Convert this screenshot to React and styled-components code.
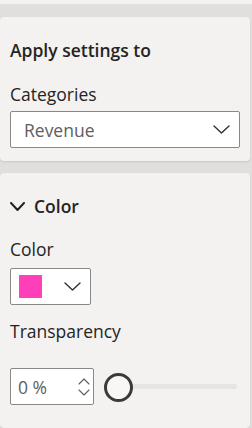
import React from 'react';
import styled, { createGlobalStyle } from 'styled-components';

const GlobalStyle = createGlobalStyle`
  html, body {
    margin: 0;
    padding: 0;
    background: #e1dfdd;
  }
  body {
    font-family: "Open Sans", "Noto Sans", Arial, sans-serif;
    color: #252423;
  }
`;

const Pane = styled.div`
  width: 252px;
  height: 428px;
  overflow: hidden;
  background: #e1dfdd;
  display: flex;
  flex-direction: column;
`;

const TopStrip = styled.div`
  height: 4px;
  background: #f3f2f1;
  flex-shrink: 0;
`;

const Card = styled.section`
  margin: ${p => p.$top}px 2px 0 0;
  background: #f3f2f1;
  border-radius: 4px;
  box-shadow: 0 1px 2px rgba(0, 0, 0, 0.1);
  padding: 21px 10px ${p => p.$bottom}px 10px;
  display: flex;
  flex-direction: column;
  flex: ${p => (p.$grow ? 1 : 'none')};
`;

const Title = styled.div`
  height: 24px;
  line-height: 24px;
  font-size: 17.5px;
  font-weight: 600;
  display: flex;
  align-items: center;
  gap: 9px;
`;

const Label = styled.div`
  height: 24px;
  line-height: 24px;
  font-size: 17.5px;
  margin-top: ${p => p.$gap}px;
  margin-bottom: ${p => p.$after}px;
`;

const Select = styled.div`
  box-sizing: border-box;
  height: 37px;
  width: ${p => p.$width}px;
  background: #fff;
  border: 1px solid #8a8886;
  border-radius: 2px;
  display: flex;
  align-items: center;
  justify-content: space-between;
  padding: 0 9px 0 ${p => p.$padLeft}px;
  font-size: 17.5px;
  color: #605e5c;
`;

const Swatch = styled.div`
  width: 23px;
  height: 23px;
  box-sizing: border-box;
  background: #ff3fb7;
  border: 1px solid #8a8886;
`;

const SliderRow = styled.div`
  display: flex;
  align-items: center;
`;

const NumberBox = styled.div`
  box-sizing: border-box;
  width: 84px;
  height: 37px;
  background: #fff;
  border: 1px solid #8a8886;
  border-radius: 2px;
  display: flex;
  align-items: center;
  justify-content: space-between;
  padding: 0 3px 0 7px;
  font-size: 17.5px;
  color: #605e5c;
`;

const Spinner = styled.div`
  display: flex;
  flex-direction: column;
  gap: 4px;
`;

const Track = styled.div`
  position: relative;
  flex: 1;
  height: 28px;
  margin: 0 3px 0 10px;
  display: flex;
  align-items: center;
`;

const Rail = styled.div`
  flex: 1;
  height: 5px;
  margin-left: 10px;
  border-radius: 3px;
  background: #e6e5e4;
`;

const Thumb = styled.div`
  position: absolute;
  left: 0;
  top: 0;
  width: 29px;
  height: 29px;
  box-sizing: border-box;
  border-radius: 50%;
  border: 3px solid #3b3a39;
  background: #f8f7f6;
`;

const Chevron = ({ w = 17, h = 9, stroke = '#323130', sw = 1.4, up = false }) => (
  <svg width={w} height={h} viewBox={`0 0 ${w} ${h}`} fill="none">
    <path
      d={up ? `M1 ${h - 1} L${w / 2} 1 L${w - 1} ${h - 1}` : `M1 1 L${w / 2} ${h - 1} L${w - 1} 1`}
      stroke={stroke}
      strokeWidth={sw}
      strokeLinecap="round"
      strokeLinejoin="round"
    />
  </svg>
);

export default function App() {
  return (
    <>
      <GlobalStyle />
      <Pane>
        <TopStrip />
        <Card $top={13} $bottom={13}>
          <Title>Apply settings to</Title>
          <Label $gap={20} $after={5}>Categories</Label>
          <Select $width={230} $padLeft={13}>
            <span>Revenue</span>
            <Chevron />
          </Select>
        </Card>
        <Card $top={12} $bottom={0} $grow>
          <Title>
            <Chevron w={15} h={9} sw={2} stroke="#252423" />
            <span>Color</span>
          </Title>
          <Label $gap={19} $after={7}>Color</Label>
          <Select $width={81} $padLeft={8}>
            <Swatch />
            <Chevron />
          </Select>
          <Label $gap={14} $after={25}>Transparency</Label>
          <SliderRow>
            <NumberBox>
              <span>0 %</span>
              <Spinner>
                <Chevron w={12} h={7} stroke="#605e5c" sw={1.1} up />
                <Chevron w={12} h={7} stroke="#605e5c" sw={1.1} />
              </Spinner>
            </NumberBox>
            <Track>
              <Rail />
              <Thumb />
            </Track>
          </SliderRow>
        </Card>
      </Pane>
    </>
  );
}
